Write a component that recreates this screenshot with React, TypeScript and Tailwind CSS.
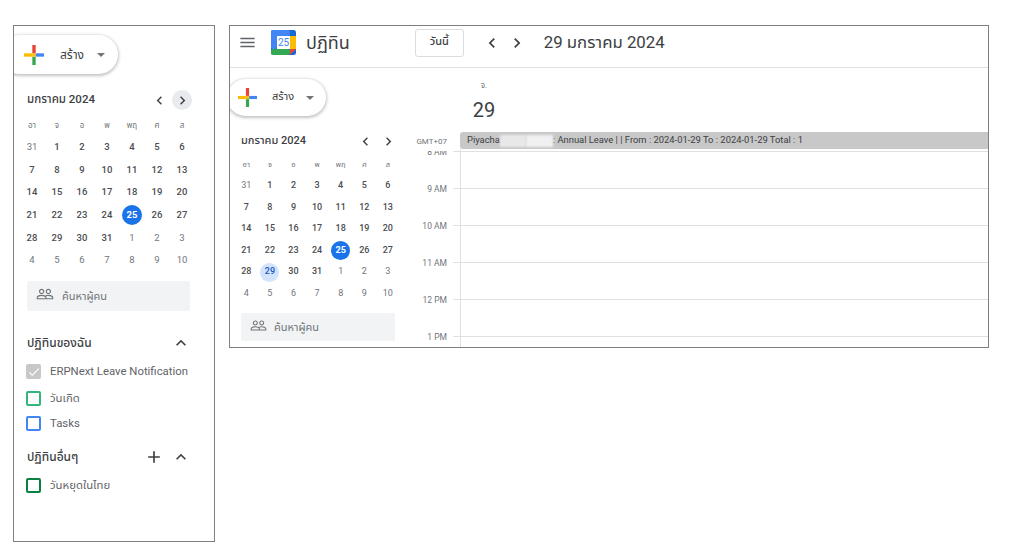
import { MdPeopleOutline, MdExpandLess, MdChevronLeft, MdChevronRight, MdAdd, MdMenu, MdCheck } from "react-icons/md";

const FONT = "font-['Roboto','Noto_Sans','Noto_Sans_Thai','Liberation_Sans',sans-serif]";

const weekDays = ["อา", "จ", "อ", "พ", "พฤ", "ศ", "ส"];
const days = [31, ...Array.from({ length: 31 }, (_, i) => i + 1), 1, 2, 3, 4, 5, 6, 7, 8, 9, 10];

function Plus({ size }: { size: number }) {
  return (
    <svg width={size} height={size} viewBox="0 0 36 36" className="shrink-0">
      <rect x="15" y="0" width="6" height="15" fill="#ea4335" />
      <rect x="0" y="15" width="15" height="6" fill="#fbbc04" />
      <rect x="15" y="21" width="6" height="15" fill="#34a853" />
      <rect x="21" y="15" width="15" height="6" fill="#4285f4" />
      <rect x="15" y="15" width="6" height="6" fill="#fbbc04" />
    </svg>
  );
}

function Caret() {
  return <span className="w-0 h-0 border-x-[4.5px] border-x-transparent border-t-[4.5px] border-t-[#70757a]" />;
}

function CreateButton({ big }: { big: boolean }) {
  return (
    <div
      className={
        big
          ? "flex items-center w-[118px] h-[39px] -ml-[14px] pl-[24px] rounded-[20px] bg-white shadow-[0_1px_3px_1px_rgba(60,64,67,0.3)]"
          : "flex items-center w-[99px] h-[37px] -ml-[14px] pl-[11px] rounded-[19px] bg-white shadow-[0_1px_3px_1px_rgba(60,64,67,0.3)]"
      }
    >
      <Plus size={big ? 20 : 19} />
      <span className={big ? "ml-[16px] text-[12px] text-[#3c4043]" : "ml-[15px] text-[11px] text-[#3c4043]"}>สร้าง</span>
      <span className={big ? "ml-[13px] flex" : "ml-[12px] flex"}>
        <Caret />
      </span>
    </div>
  );
}

function MiniCal({ big }: { big: boolean }) {
  const colW = big ? "grid-cols-[repeat(7,25px)]" : "grid-cols-[repeat(7,23.6px)]";
  const rowH = big ? "h-[22.6px]" : "h-[21.6px]";
  const size = big ? "w-[20px] h-[20px]" : "w-[19px] h-[19px]";
  return (
    <div>
      <div className={big ? "grid grid-cols-[repeat(7,25px)] ml-[5.5px] text-[8px] text-[#70757a] h-[16px] items-center" : "grid grid-cols-[repeat(7,23.6px)] -ml-[6.5px] text-[7.5px] text-[#70757a] h-[16px] items-center"}>
        {weekDays.map((d) => (
          <div key={d} className="text-center">{d}</div>
        ))}
      </div>
      <div className={`grid ${colW} ${big ? "ml-[5.5px] mt-[2px]" : "-ml-[6.5px] mt-[2px]"}`}>
        {days.map((d, i) => {
          const current = i >= 1 && i <= 31;
          const today = current && d === 25;
          const selected = !big && current && d === 29;
          return (
            <div key={i} className={`${rowH} flex items-center justify-center`}>
              <span
                className={`${size} rounded-full flex items-center justify-center ${big ? "text-[9.5px]" : "text-[9px]"} ${
                  today
                    ? "bg-[#1a73e8] text-white font-bold"
                    : selected
                      ? "bg-[#d2e3fc] text-[#185abc] font-medium"
                      : current
                        ? "text-[#4a4d51] font-medium"
                        : "text-[#70757a]"
                }`}
              >
                {d}
              </span>
            </div>
          );
        })}
      </div>
    </div>
  );
}

function SearchBox({ big }: { big: boolean }) {
  return (
    <div
      className={
        big
          ? "flex items-center w-[163px] h-[30px] ml-[13px] pl-[9px] rounded-[2px] bg-[#f1f3f4] text-[#70757a]"
          : "flex items-center w-[154px] h-[28px] pl-[9px] rounded-[2px] bg-[#f1f3f4] text-[#70757a]"
      }
    >
      <MdPeopleOutline size={big ? 18 : 17} className="shrink-0 -mt-[3px]" />
      <span className={big ? "ml-[8px] mt-[3px] text-[11px]" : "ml-[7px] mt-[3px] text-[11px]"}>ค้นหาผู้คน</span>
    </div>
  );
}

function CalRow({ label, border, checked, className = "" }: { label: string; border: string; checked?: boolean; className?: string }) {
  return (
    <div className={`flex items-center h-[16px] ${className}`}>
      {checked ? (
        <span className={`w-[15px] h-[15px] rounded-[2px] flex items-center justify-center ${border} text-white`}>
          <MdCheck size={14} />
        </span>
      ) : (
        <span className={`w-[15px] h-[15px] rounded-[2px] border-[2px] ${border}`} />
      )}
      <span className="ml-[9px] text-[11.35px] text-[#5f6368] whitespace-nowrap">{label}</span>
    </div>
  );
}

function LeftPanel() {
  return (
    <section className="w-[202px] h-[517px] shrink-0 border border-[#7f7f7f] bg-white overflow-hidden">
      <div className="pt-[9px]">
        <CreateButton big />
      </div>
      <div className="flex items-center h-[26px] mt-[13px] pl-[13px]">
        <span className="text-[11.5px] text-[#3c4043] font-medium">มกราคม 2024</span>
        <div className="ml-auto mr-[22px] flex items-center gap-[4px] text-[#3c4043]">
          <MdChevronLeft size={17} />
          <span className="w-[20px] h-[20px] rounded-full bg-[#e8eaed] flex items-center justify-center">
            <MdChevronRight size={17} />
          </span>
        </div>
      </div>
      <div className="mt-[5px]">
        <MiniCal big />
      </div>
      <div className="mt-[9px]">
        <SearchBox big />
      </div>
      <div className="ml-[13px] mr-[23px] mt-[21px]">
        <div className="flex items-center justify-between h-[22px] text-[12px] text-[#3c4043] font-medium">
          <span>ปฏิทินของฉัน</span>
          <MdExpandLess size={20} />
        </div>
        <div className="mt-[10px] -ml-[1px] flex flex-col">
          <CalRow label="ERPNext Leave Notification" border="bg-[#c8c8c8]" checked />
          <CalRow label="วันเกิด" border="border-[#33b679]" className="mt-[11px]" />
          <CalRow label="Tasks" border="border-[#4285f4]" className="mt-[9px]" />
        </div>
        <div className="flex items-center h-[22px] mt-[14px] text-[12px] text-[#3c4043] font-medium">
          <span>ปฏิทินอื่นๆ</span>
          <MdAdd size={20} className="ml-auto mr-[7px]" />
          <MdExpandLess size={20} />
        </div>
        <div className="mt-[10px] -ml-[1px]">
          <CalRow label="วันหยุดในไทย" border="border-[#0b8043]" />
        </div>
      </div>
    </section>
  );
}

function Logo() {
  return (
    <svg width="25" height="25" viewBox="0 0 25 25" className="shrink-0">
      <rect x="0" y="0" width="25" height="25" rx="2.5" fill="#1967d2" />
      <rect x="0" y="0" width="19" height="6" rx="2" fill="#4285f4" />
      <rect x="0" y="0" width="6" height="19" rx="2" fill="#4285f4" />
      <rect x="19" y="6" width="6" height="13" fill="#fbbc04" />
      <rect x="0" y="19" width="19" height="6" rx="2" fill="#34a853" />
      <path d="M19 19h6l-6 6z" fill="#ea4335" />
      <rect x="6" y="6" width="13" height="13" fill="#fff" />
      <text x="12.5" y="16" textAnchor="middle" fontSize="10" fill="#4285f4" fontFamily="Roboto">25</text>
    </svg>
  );
}

const hours = ["8 AM", "9 AM", "10 AM", "11 AM", "12 PM", "1 PM"];

function RightPanel() {
  return (
    <section className="w-[760px] h-[323px] shrink-0 border border-[#7f7f7f] bg-white overflow-hidden flex flex-col">
      <header className="h-[42px] shrink-0 border-b border-[#e0e0e0] flex items-center pl-[8px] pb-[8px]">
        <MdMenu size={19} className="text-[#5f6368] shrink-0" />
        <span className="ml-[14px] flex"><Logo /></span>
        <span className="ml-[10px] text-[18px] text-[#3c4043]">ปฏิทิน</span>
        <span className="ml-[65px] w-[49px] h-[28px] rounded-[3px] border border-[#dadce0] flex items-center justify-center text-[11px] font-medium text-[#3c4043]">
          วันนี้
        </span>
        <MdChevronLeft size={20} className="ml-[18px] text-[#3c4043]" />
        <MdChevronRight size={20} className="ml-[5px] text-[#3c4043]" />
        <span className="ml-[17px] text-[16.8px] text-[#3c4043] whitespace-nowrap">29 มกราคม 2024</span>
      </header>
      <div className="flex flex-1 min-h-0">
        <div className="w-[171px] shrink-0 pl-[11px] pt-[11px] overflow-hidden">
          <CreateButton big={false} />
          <div className="flex items-center h-[20px] mt-[15px]">
            <span className="text-[11px] text-[#3c4043] font-medium">มกราคม 2024</span>
            <div className="ml-auto mr-[4px] flex items-center gap-[6px] text-[#3c4043]">
              <MdChevronLeft size={17} />
              <MdChevronRight size={17} />
            </div>
          </div>
          <div className="mt-[6px]">
            <MiniCal big={false} />
          </div>
          <div className="mt-[8px]">
            <SearchBox big={false} />
          </div>
        </div>
        <div className="flex-1 min-w-0 flex flex-col">
          <div className="h-[64px] shrink-0 ml-[59px] w-[48px] flex flex-col items-center pt-[12px]">
            <span className="text-[8px] text-[#70757a] leading-[12px]">จ.</span>
            <span className="text-[20px] text-[#3c4043] leading-[24px] mt-[6px]">29</span>
          </div>
          <div className="flex h-[17px] shrink-0">
            <span className="w-[59px] shrink-0 pr-[13px] pt-[4px] text-right text-[8px] leading-[12px] whitespace-nowrap text-[#70757a]">GMT+07</span>
            <div className="flex-1 h-full rounded-l-[3px] bg-[#c8c8c8] pl-[7px] flex items-center text-[9.4px] text-[#3c4043] whitespace-nowrap overflow-hidden">
              <span>Piyacha</span>
              <span className="w-[26px] h-[12px] bg-[#e8e8e8] blur-[1px]" />
              <span className="w-[27px] h-[12px] bg-[#f0f0f0] blur-[1px]" />
              <span>: Annual Leave | | From : 2024-01-29 To : 2024-01-29 Total : 1</span>
            </div>
          </div>
          <div className="h-[2px] shrink-0 ml-[59px] border-l border-[#e0e0e0]" />
          <div className="flex-1 min-h-0 overflow-hidden">
            {hours.map((h) => (
              <div key={h} className="flex h-[37px]">
                <span className="w-[46px] h-[12px] mt-[1px] shrink-0 text-right text-[8.5px] leading-[12px] text-[#70757a] -translate-y-1/2">{h}</span>
                <span className="w-[6px] shrink-0" />
                <span className="w-[7px] shrink-0 border-t border-[#e0e0e0]" />
                <span className="flex-1 border-t border-l border-[#e0e0e0]" />
              </div>
            ))}
          </div>
        </div>
      </div>
    </section>
  );
}

export default function App() {
  return (
    <div className={`w-[1012px] h-[559px] bg-white overflow-hidden flex items-start gap-[14px] pl-[13px] pt-[25px] ${FONT}`}>
      <LeftPanel />
      <RightPanel />
    </div>
  );
}
